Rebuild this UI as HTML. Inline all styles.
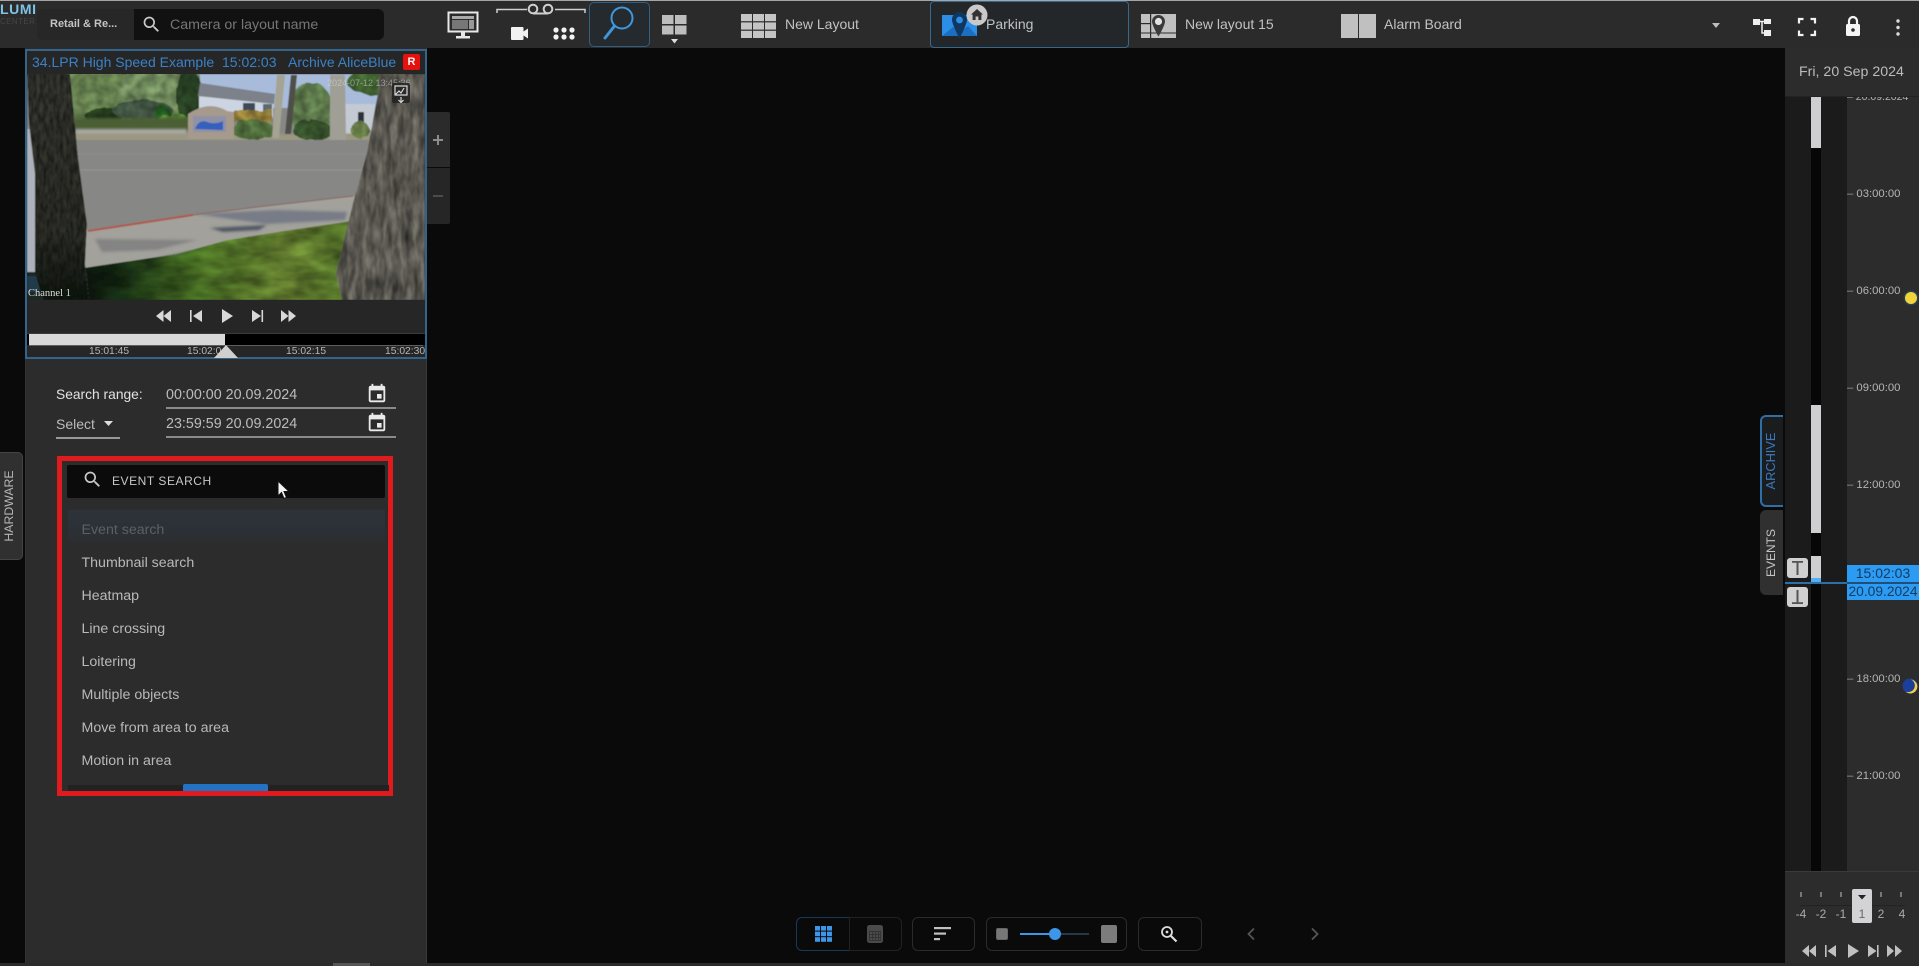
<!DOCTYPE html>
<html lang="en">
<head>
<meta charset="utf-8">
<title>Event search</title>
<style>
html,body{margin:0;padding:0;background:#0a0a0a;width:1919px;height:966px;overflow:hidden}
#r{position:relative;width:1919px;height:966px;overflow:hidden;background:#0a0a0a;font-family:"Liberation Sans",sans-serif;font-size:14px;color:#bbb;filter:blur(.35px)}
#r div,#r svg,#r span.t{position:absolute}
.t{white-space:nowrap;line-height:20px;height:20px}
.tick{color:#b5b5b5;font-size:10.3px;line-height:14px;height:14px;white-space:nowrap}
.rt{color:#b5b5b5;font-size:11.3px;line-height:14px;height:14px;white-space:nowrap;left:1847px}
.rt span{color:#9a9a9a}
.item{left:81.5px;color:#b9b9b9;font-size:14.2px;line-height:20px;height:20px;white-space:nowrap}
.btn{border:1.5px solid #2b2b2b;border-radius:6px;box-sizing:border-box;top:917px;height:34px}
.vt{transform:rotate(-90deg);transform-origin:center;white-space:nowrap;text-align:center}
</style>
</head>
<body>
<div id="r">

<!-- Top bar -->
<div style="left:0;top:0;width:1919px;height:48px;background:#2b2b2b"></div>
<div style="left:0;top:0;width:1919px;height:1px;background:#a5a5a5"></div>

<div class="t" style="left:0;top:-1px;font-size:14px;font-weight:bold;color:#7fc4e6;letter-spacing:.6px">LUMI</div>
<div class="t" style="left:0;top:12px;font-size:8px;color:#444;letter-spacing:.4px">CENTER</div>

<div style="left:37px;top:9px;width:347px;height:31px;background:#272727;border-radius:6px"></div>
<div style="left:134px;top:9px;width:250px;height:31px;background:#111;border-radius:0 6px 6px 0"></div>
<div class="t" style="left:50px;top:14px;font-size:11px;font-weight:bold;color:#c4c4c4">Retail &amp; Re...</div>
<svg style="left:141px;top:14px" width="21" height="21" viewBox="0 0 24 24" fill="#c8c8c8"><path d="M15.5 14h-.79l-.28-.27C15.41 12.59 16 11.11 16 9.5 16 5.91 13.09 3 9.5 3S3 5.91 3 9.5 5.91 16 9.5 16c1.61 0 3.09-.59 4.23-1.57l.27.28v.79l5 4.99L20.49 19l-4.99-5zm-6 0C7.01 14 5 11.99 5 9.5S7.01 5 9.5 5 14 7.01 14 9.5 11.99 14 9.5 14z"/></svg>
<div class="t" style="left:170px;top:15px;color:#767676;font-size:14.2px">Camera or layout name</div>

<!-- monitor icon -->
<svg style="left:447px;top:11px" width="32" height="29" viewBox="0 0 32 29" fill="none">
<rect x="1.5" y="1.5" width="29" height="19" fill="#2b2b2b" stroke="#e8e8e8" stroke-width="2"/>
<rect x="5" y="5" width="22" height="3" fill="#aaa"/><rect x="5" y="9" width="16" height="9" fill="#777"/><rect x="22" y="9" width="5" height="9" fill="#999"/>
<rect x="14" y="21" width="4" height="4" fill="#e8e8e8"/><rect x="9" y="25" width="14" height="2.5" fill="#e8e8e8"/>
</svg>
<!-- tape bracket -->
<svg style="left:496px;top:2px" width="90" height="14" viewBox="0 0 90 14" fill="none" stroke="#cfcfcf" stroke-width="1.5">
<path d="M1 11V7.5H31"/><path d="M59 7.5H89V11"/>
<circle cx="37" cy="7" r="4.3" stroke-width="2"/><circle cx="52" cy="7" r="4.3" stroke-width="2"/><path d="M37 11.5H52" stroke-width="2"/>
</svg>
<!-- camera -->
<svg style="left:511px;top:27px" width="17" height="13" viewBox="0 0 17 13" fill="#f2f2f2"><rect x="0" y="0" width="12.5" height="13" rx="1"/><path d="M12.5 4.5L17 1.5V11.5L12.5 8.5Z"/></svg>
<!-- dots -->
<svg style="left:553px;top:27px" width="22" height="13" viewBox="0 0 22 13" fill="#f2f2f2"><circle cx="3" cy="3" r="2.6"/><circle cx="11" cy="3" r="2.6"/><circle cx="19" cy="3" r="2.6"/><circle cx="3" cy="10" r="2.6"/><circle cx="11" cy="10" r="2.6"/><circle cx="19" cy="10" r="2.6"/></svg>
<!-- search tab -->
<div style="left:589px;top:2px;width:61px;height:45px;box-sizing:border-box;border:1.5px solid #2f5f85;border-radius:5px;background:#252a2e"></div>
<svg style="left:589px;top:2px" width="61" height="45" viewBox="0 0 61 45" fill="none" stroke="#3f97dc"><circle cx="33" cy="16" r="10.5" stroke-width="2"/><path d="M25.5 24L16 36" stroke-width="3" stroke-linecap="round"/></svg>
<!-- layouts grid -->
<svg style="left:662px;top:15px" width="25" height="33" viewBox="0 0 25 33" fill="#bdbdbd"><rect x="0" y="0" width="11.5" height="9"/><rect x="13" y="0" width="11.5" height="9"/><rect x="0" y="10.5" width="11.5" height="9"/><rect x="13" y="10.5" width="11.5" height="9"/><path d="M9 24h7l-3.5 4.5z" fill="#ddd"/></svg>

<!-- New Layout -->
<svg style="left:741px;top:14px" width="35" height="24" viewBox="0 0 35 24" fill="#c4c4c4"><rect width="11" height="7.2"/><rect x="12" width="11" height="7.2"/><rect x="24" width="11" height="7.2"/><rect y="8.4" width="11" height="7.2"/><rect x="12" y="8.4" width="11" height="7.2"/><rect x="24" y="8.4" width="11" height="7.2"/><rect y="16.8" width="11" height="7.2"/><rect x="12" y="16.8" width="11" height="7.2"/><rect x="24" y="16.8" width="11" height="7.2"/></svg>
<div class="t" style="left:785px;top:14px;color:#c2c2c2">New Layout</div>

<!-- Parking -->
<div style="left:930px;top:1px;width:199px;height:47px;box-sizing:border-box;border:1.5px solid #35698f;border-radius:4px;background:#24272a"></div>
<svg style="left:942px;top:12px" width="36" height="28" viewBox="0 0 36 28">
<rect x="0" y="3" width="35" height="21" fill="#2c8ee6"/>
<path d="M0 24L11 15L18 20L26 14L35 24Z" fill="#1c6fc0"/>
<path d="M17.5 0a7.5 7.5 0 0 1 7.5 7.5c0 5-7.5 19-7.5 19s-7.5-14-7.5-19A7.5 7.5 0 0 1 17.5 0z" fill="#10375f"/>
<circle cx="17.5" cy="8" r="3.4" fill="#2c8ee6"/>
</svg>
<svg style="left:966px;top:4px" width="22" height="22" viewBox="0 0 22 22"><circle cx="11" cy="11" r="10.5" fill="#c9c9c9"/><path d="M11 5l6 5.5h-1.6V16h-3v-3.5h-2.8V16h-3v-5.5H5z" fill="#333"/></svg>
<div class="t" style="left:986px;top:14px;color:#c2c2c2">Parking</div>

<!-- New layout 15 -->
<svg style="left:1141px;top:14px" width="35" height="24" viewBox="0 0 35 24">
<rect width="35" height="24" fill="#c0c0c0"/><rect x="0" y="9" width="9" height="1.2" fill="#2b2b2b"/><rect x="9" y="0" width="1.2" height="24" fill="#2b2b2b"/><rect y="18.5" width="35" height="1" fill="#2b2b2b"/>
<path d="M17.5 1a6.5 6.5 0 0 1 6.5 6.5c0 4-6.5 15-6.5 15S11 11.5 11 7.5A6.5 6.5 0 0 1 17.5 1z" fill="#3a3a3a"/><circle cx="17.5" cy="7.5" r="3.6" fill="#e2e2e2"/>
</svg>
<div class="t" style="left:1185px;top:14px;color:#c2c2c2">New layout 15</div>

<!-- Alarm Board -->
<svg style="left:1341px;top:14px" width="35" height="24" viewBox="0 0 35 24" fill="#c0c0c0"><rect width="17" height="24"/><rect x="18" width="17" height="24"/></svg>
<div class="t" style="left:1384px;top:14px;color:#c2c2c2">Alarm Board</div>

<!-- Top right icons -->
<svg style="left:1711px;top:22px" width="10" height="7" viewBox="0 0 10 7" fill="#bdbdbd"><path d="M1 1h8L5 6z"/></svg>
<svg style="left:1752px;top:16px" width="20" height="21" viewBox="0 0 20 21" fill="#eee"><rect x="1" y="3" width="7" height="6"/><rect x="12" y="3" width="7" height="5"/><rect x="12" y="14" width="7" height="6"/><path d="M8 5.5h4M10 5.5V17h2" stroke="#eee" stroke-width="1.5" fill="none"/></svg>
<svg style="left:1797px;top:17px" width="20" height="20" viewBox="0 0 20 20" fill="none" stroke="#f2f2f2" stroke-width="2.2"><path d="M2 6.5V2h4.5M13.5 2H18v4.5M18 13.5V18h-4.5M6.5 18H2v-4.5"/></svg>
<svg style="left:1843px;top:15px" width="20" height="22" viewBox="0 0 20 22"><path d="M6 9V6a4 4 0 0 1 8 0v3" stroke="#f5f5f5" stroke-width="2.2" fill="none"/><rect x="3" y="9" width="14" height="12" rx="1.5" fill="#f5f5f5"/><circle cx="10" cy="15" r="1.8" fill="#2b2b2b"/></svg>
<svg style="left:1895px;top:18px" width="6" height="20" viewBox="0 0 6 20" fill="#ddd"><circle cx="3" cy="3" r="1.7"/><circle cx="3" cy="9.5" r="1.7"/><circle cx="3" cy="16" r="1.7"/></svg>

<!-- Left panel -->
<div style="left:25px;top:48px;width:402px;height:915px;background:#2c2c2c;border-right:1px solid #3a3a3a;border-left:1px solid #333;box-sizing:border-box"></div>

<!-- Video widget -->
<div style="left:25px;top:49px;width:402px;height:310px;box-sizing:border-box;border:2px solid #33658c;background:#262626"></div>
<div class="t" style="left:32px;top:52px;color:#3a82c6">34.LPR High Speed Example</div>
<div class="t" style="left:222px;top:52px;color:#3a82c6">15:02:03</div>
<div class="t" style="left:288px;top:52px;color:#3a82c6">Archive AliceBlue</div>
<div class="t" style="left:403px;top:54px;width:17px;height:16px;line-height:16px;background:#e4110f;border-radius:2px;color:#f3f3f3;text-align:center;font-size:11px;font-weight:bold">R</div>

<svg style="left:27px;top:74px" width="398" height="226" viewBox="0 0 398 226">
<defs>
<filter id="barkL" x="0" y="0" width="100%" height="100%" color-interpolation-filters="sRGB"><feTurbulence type="fractalNoise" baseFrequency=".3 .1" numOctaves="2" seed="4" result="n"/><feColorMatrix in="n" type="matrix" values=".7 0 0 0 .25 .7 0 0 0 .25 .7 0 0 0 .25 0 0 0 0 1" result="g"/><feBlend in="SourceGraphic" in2="g" mode="multiply" result="b"/><feComposite in="b" in2="SourceGraphic" operator="in"/></filter>
<filter id="barkR" x="0" y="0" width="100%" height="100%" color-interpolation-filters="sRGB"><feTurbulence type="fractalNoise" baseFrequency=".14 .04" numOctaves="3" seed="9" result="n"/><feColorMatrix in="n" type="matrix" values=".85 0 0 0 .2 .85 0 0 0 .2 .85 0 0 0 .2 0 0 0 0 1" result="g"/><feBlend in="SourceGraphic" in2="g" mode="multiply" result="b"/><feComposite in="b" in2="SourceGraphic" operator="in"/></filter>
<filter id="leaf" x="-5%" y="-5%" width="110%" height="110%" color-interpolation-filters="sRGB"><feTurbulence type="fractalNoise" baseFrequency=".1" numOctaves="2" seed="3" result="n"/><feDisplacementMap in="SourceGraphic" in2="n" scale="6" result="d"/><feColorMatrix in="n" type="matrix" values=".6 0 0 0 .45 .6 0 0 0 .45 .6 0 0 0 .45 0 0 0 0 1" result="g"/><feBlend in="d" in2="g" mode="multiply" result="b"/><feComposite in="b" in2="d" operator="in"/></filter>
<filter id="grass" x="0" y="0" width="100%" height="100%" color-interpolation-filters="sRGB"><feTurbulence type="fractalNoise" baseFrequency=".03 .07" numOctaves="3" seed="6" result="n"/><feColorMatrix in="n" type="matrix" values=".8 0 0 0 .35 .8 0 0 0 .35 .8 0 0 0 .35 0 0 0 0 1" result="g"/><feBlend in="SourceGraphic" in2="g" mode="multiply" result="b"/><feComposite in="b" in2="SourceGraphic" operator="in"/></filter>
<filter id="soft" x="-10%" y="-30%" width="120%" height="160%"><feGaussianBlur stdDeviation="1.4"/></filter>
<filter id="all" x="0" y="0" width="100%" height="100%"><feGaussianBlur stdDeviation=".6"/></filter>
<linearGradient id="gl" x1="56" x2="324" y1="0" y2="0" gradientUnits="userSpaceOnUse"><stop offset="0" stop-color="#0e1a10"/><stop offset=".16" stop-color="#1d3a18"/><stop offset=".4" stop-color="#588a2c"/><stop offset=".75" stop-color="#7fa03c"/><stop offset="1" stop-color="#6a9234"/></linearGradient>
<linearGradient id="lt" x1="0" x2="0" y1="0" y2="1"><stop offset="0" stop-color="#4a4a42"/><stop offset=".7" stop-color="#3e4036"/><stop offset="1" stop-color="#141f14"/></linearGradient>
</defs>
<g filter="url(#all)">
<rect width="398" height="226" fill="#878786"/>
<!-- sky -->
<rect x="165" y="0" width="190" height="34" fill="#a8bbdb"/>
<!-- foliage -->
<g filter="url(#leaf)">
<rect x="38" y="0" width="134" height="46" fill="#80a262"/>
<ellipse cx="70" cy="18" rx="32" ry="28" fill="#86a868"/>
<ellipse cx="125" cy="16" rx="34" ry="24" fill="#94b67a"/>
<ellipse cx="162" cy="22" rx="13" ry="26" fill="#35552f"/>
<ellipse cx="76" cy="42" rx="18" ry="9" fill="#324f28"/>
<ellipse cx="115" cy="36" rx="30" ry="10" fill="#566f58"/>
<ellipse cx="135" cy="40" rx="8" ry="9" fill="#2f7a2c"/>
<ellipse cx="148" cy="48" rx="16" ry="8" fill="#6ea844"/>
<ellipse cx="284" cy="36" rx="22" ry="28" fill="#7a9e62"/>
<ellipse cx="352" cy="8" rx="32" ry="14" fill="#527e3e"/>
</g>
<!-- house -->
<path d="M172 22L246 28V44H172Z" fill="#cdd5e2"/>
<path d="M173 9L248 20L247 30L171 22Z" fill="#7b818a"/>
<rect x="216" y="29" width="12" height="12" fill="#3e4a55"/><rect x="236" y="30" width="9" height="13" fill="#5b6772"/>
<rect x="314" y="30" width="34" height="30" fill="#c4cad4"/>
<rect x="331" y="38" width="6" height="12" fill="#2c3238"/>
<!-- ground strip -->
<rect x="40" y="44" width="125" height="14" fill="#4c5f36" filter="url(#soft)"/>
<rect x="48" y="55" width="112" height="6" fill="#a8a8a4" filter="url(#soft)"/>
<rect x="40" y="60" width="310" height="7" fill="#9c9880" filter="url(#soft)"/>
<!-- bushes -->
<g filter="url(#leaf)"><rect x="206" y="36" width="40" height="12" fill="#c4a94c"/><ellipse cx="226" cy="56" rx="22" ry="10" fill="#6c9350"/><ellipse cx="285" cy="56" rx="20" ry="10" fill="#466a38"/><ellipse cx="333" cy="56" rx="9" ry="9" fill="#88a35e"/></g>
<!-- palm trunks -->
<path d="M250 1L258 1L252 64L245 64Z" fill="#a5a394"/>
<path d="M264 1L270 1L264 60L258 60Z" fill="#4f4f4a"/>
<path d="M303 1L318 1L319 66L303 66Z" fill="#a09f96"/>
<!-- sign -->
<path d="M161 40Q182 26 200 37L207 38V65H161Z" fill="#a69a8c"/>
<rect x="166" y="42" width="33" height="16" fill="#9091a8"/>
<path d="M168 55Q172 45 180 48T196 47V56Z" fill="#3460bd"/>
<!-- road -->
<path d="M8 66H342L328 122L166 141L61 156L8 158Z" fill="#878786"/>
<path d="M50 96H340" stroke="#979797" stroke-width="1.5" opacity=".7"/>
<path d="M50 80H340" stroke="#969696" stroke-width="1" opacity=".5"/>
<path d="M50 124H338" stroke="#6e6e6e" stroke-width="7" opacity=".3" filter="url(#soft)"/>
<!-- sidewalk -->
<path d="M0 160L61 156L166 141L328 122L322 150L200 168L70 196L0 200Z" fill="#a2a19b"/>
<path d="M168 140L250 136L320 138L318 146L240 150Z" fill="#6d7282" opacity=".8" filter="url(#soft)"/>
<path d="M183 154L240 151L232 156L196 158Z" fill="#4f5664" filter="url(#soft)"/>
<path d="M68 165L170 166L130 176L75 178Z" fill="#737577" opacity=".65" filter="url(#soft)"/>
<path d="M61 157L166 141" stroke="#b0564a" stroke-width="2" fill="none"/>
<path d="M166 141L230 133L326 122" stroke="#8c6e66" stroke-width="1.2" fill="none"/>
<rect x="0" y="55" width="12" height="145" fill="#aeb2ba"/>
<!-- grass -->
<path d="M56 194L150 180L200 166L256 157L324 147L318 226H56Z" fill="url(#gl)" filter="url(#grass)"/>
<rect x="0" y="198" width="60" height="28" fill="#1a2620"/>
<path d="M0 202h12v16H0z" fill="#2c4a6a" opacity=".6"/>
<!-- trees -->
<path d="M0 0H43L46 30L51 83L60 150L58 190L62 226H16L8 200L8 100L2 50Z" fill="url(#lt)" filter="url(#barkL)"/>
<path d="M352 0H398V226H315L309 199L326 129L340 79L351 19Z" fill="#8f8b80" filter="url(#barkR)"/>
</g>
<text x="1" y="222" font-family="Liberation Serif,serif" font-size="10.5" fill="#dedede">Channel 1</text>
<text x="300" y="12" font-family="Liberation Sans,sans-serif" font-size="9" fill="#d8d8d8" opacity=".55">2024-07-12 13:45:36</text>
<rect x="365" y="9" width="18" height="20" rx="2" fill="#222" opacity=".85"/>
<path d="M368 12h12v9h-12zM368 21l4-4 2 2 3-5M374 23v5M371.5 26l2.5 2.5 2.5-2.5" fill="none" stroke="#d8d8d8" stroke-width="1.2"/>
</svg>

<!-- controls -->
<svg style="left:150px;top:306px" width="160" height="20" viewBox="0 0 160 20" fill="#d8d8d8">
<path d="M6 10l7.5-6v12zM13.5 10L21 4v12z"/>
<path d="M40 4h1.6v12h-1.6zM52 4v12l-9-6z"/>
<path d="M72 3v14l11-7z"/>
<path d="M102 4v12l9-6zM111.5 4h1.6v12h-1.6z"/>
<path d="M131 4v12l7.5-6zM138.5 4v12l7.5-6z"/>
</svg>

<!-- timeline -->
<div style="left:27px;top:333px;width:398px;height:12px;background:#000;border-top:1px solid #3a3a3a;box-sizing:border-box"></div>
<div style="left:29px;top:334px;width:196px;height:11px;background:#d8d8d8"></div>
<div style="left:29px;top:345px;width:394px;height:1px;background:#5e5e5e"></div>
<div class="tick" style="left:89px;top:345px">15:01:45</div>
<div class="tick" style="left:187px;top:345px">15:02:0</div>
<div class="tick" style="left:286px;top:345px">15:02:15</div>
<div class="tick" style="left:385px;top:345px">15:02:30</div>
<svg style="left:213px;top:345px" width="26" height="13" viewBox="0 0 26 13"><path d="M13 0L25 13H1Z" fill="#cfcfcf"/></svg>

<!-- zoom buttons -->
<div style="left:427px;top:112px;width:23px;height:55px;background:#2b2b2b;border-radius:0 2px 0 0"></div>
<div style="left:427px;top:168px;width:23px;height:56px;background:#262626;border-radius:0 0 2px 0"></div>
<svg style="left:432px;top:134px" width="12" height="12" viewBox="0 0 12 12" fill="#8c8c8c"><rect x="5" y="1" width="2" height="10"/><rect x="1" y="5" width="10" height="2"/></svg>
<svg style="left:432px;top:190px" width="12" height="12" viewBox="0 0 12 12" fill="#4c4c4c"><rect x="1" y="5" width="10" height="2"/></svg>

<!-- Search range -->
<div class="t" style="left:56px;top:385px;color:#e2e2e2;font-size:13.8px">Search range:</div>
<div class="t" style="left:166px;top:385px;color:#bcbcbc;font-size:14.3px">00:00:00 20.09.2024</div>
<div style="left:166px;top:407px;width:230px;height:1.5px;background:#8a8a8a"></div>
<svg style="left:366px;top:383px" width="22" height="22" viewBox="0 0 24 24" fill="#eaeaea"><path d="M17 12h-5v5h5v-5zM16 1v2H8V1H6v2H5c-1.11 0-1.99.9-1.99 2L3 19c0 1.1.89 2 2 2h14c1.1 0 2-.9 2-2V5c0-1.1-.9-2-2-2h-1V1h-2zm3 18H5V8h14v11z"/></svg>
<div class="t" style="left:56px;top:414px;color:#bcbcbc">Select</div>
<svg style="left:104px;top:421px" width="10" height="6" viewBox="0 0 10 6" fill="#ddd"><path d="M0 0h9L4.5 5z"/></svg>
<div style="left:56px;top:437px;width:64px;height:1.5px;background:#999"></div>
<div class="t" style="left:166px;top:414px;color:#bcbcbc;font-size:14.3px">23:59:59 20.09.2024</div>
<div style="left:166px;top:436px;width:230px;height:1.5px;background:#8a8a8a"></div>
<svg style="left:366px;top:412px" width="22" height="22" viewBox="0 0 24 24" fill="#eaeaea"><path d="M17 12h-5v5h5v-5zM16 1v2H8V1H6v2H5c-1.11 0-1.99.9-1.99 2L3 19c0 1.1.89 2 2 2h14c1.1 0 2-.9 2-2V5c0-1.1-.9-2-2-2h-1V1h-2zm3 18H5V8h14v11z"/></svg>

<!-- Red box -->
<div style="left:57px;top:456px;width:336px;height:340px;box-sizing:border-box;border:5px solid #e01b1f"></div>
<div style="left:67px;top:465px;width:318px;height:33px;background:#0b0b0b;border-radius:2px"></div>
<svg style="left:82px;top:469px" width="21" height="21" viewBox="0 0 24 24" fill="#c8c8c8"><path d="M15.5 14h-.79l-.28-.27C15.41 12.59 16 11.11 16 9.5 16 5.91 13.09 3 9.5 3S3 5.91 3 9.5 5.91 16 9.5 16c1.61 0 3.09-.59 4.23-1.57l.27.28v.79l5 4.99L20.49 19l-4.99-5zm-6 0C7.01 14 5 11.99 5 9.5S7.01 5 9.5 5 14 7.01 14 9.5 11.99 14 9.5 14z"/></svg>
<div class="t" style="left:112px;top:470.5px;font-size:12px;letter-spacing:.55px;color:#c8c8c8">EVENT SEARCH</div>
<div style="left:68px;top:510px;width:317px;height:35px;background:linear-gradient(#2d3339,#2b3035 70%,#2c2c2c)"></div>
<div class="item" style="top:520px;color:#5b6064">Event search</div>
<div class="item" style="top:553px">Thumbnail search</div>
<div class="item" style="top:586px">Heatmap</div>
<div class="item" style="top:619px">Line crossing</div>
<div class="item" style="top:652px">Loitering</div>
<div class="item" style="top:685px">Multiple objects</div>
<div class="item" style="top:718px">Move from area to area</div>
<div class="item" style="top:751px">Motion in area</div>
<div style="left:68px;top:785px;width:321px;height:6px;background:#222"></div>
<div style="left:183px;top:784px;width:85px;height:7px;background:#2273c4;border-radius:2px 2px 0 0"></div>

<!-- Cursor -->
<svg style="left:277px;top:480px" width="14" height="20" viewBox="0 0 14 20"><path d="M1 1V16L4.5 12.5L7 18.5L9.5 17.5L7 11.5H12Z" fill="#f4f4f4" stroke="#111" stroke-width="1"/></svg>

<!-- Hardware tab -->
<div style="left:-2px;top:452px;width:25px;height:108px;background:#303030;border:1px solid #444;border-radius:0 5px 5px 0;box-sizing:border-box"></div>
<div class="vt" style="left:-27px;top:496px;width:72px;height:20px;line-height:20px;font-size:12.3px;color:#b8b8b8">HARDWARE</div>

<!-- Bottom strip -->
<div style="left:0;top:963px;width:1919px;height:3px;background:#2b2b2b"></div>
<div style="left:333px;top:963px;width:37px;height:3px;background:#555"></div>

<!-- Bottom toolbar -->
<div class="btn" style="left:796px;width:54px;border-color:#193a57;border-right:none;border-radius:6px 0 0 6px"></div>
<div class="btn" style="left:849px;width:53px;border-left:1px solid #1c2c3a;border-radius:0 6px 6px 0;border-color:#222"></div>
<svg style="left:815px;top:926px" width="17" height="16" viewBox="0 0 17 16" fill="#3d96e8"><rect width="5" height="4.6"/><rect x="6" width="5" height="4.6"/><rect x="12" width="5" height="4.6"/><rect y="5.6" width="5" height="4.6"/><rect x="6" y="5.6" width="5" height="4.6"/><rect x="12" y="5.6" width="5" height="4.6"/><rect y="11.2" width="5" height="4.6"/><rect x="6" y="11.2" width="5" height="4.6"/><rect x="12" y="11.2" width="5" height="4.6"/></svg>
<svg style="left:867px;top:925px" width="16" height="18" viewBox="0 0 16 18"><rect width="16" height="18" rx="2.5" fill="#4a4a4a"/><rect x="2" y="6" width="12" height="10" fill="#333"/><path d="M3 8h10M3 11h10M3 14h10" stroke="#666" stroke-dasharray="2 1"/></svg>
<div class="btn" style="left:912px;width:63px"></div>
<svg style="left:934px;top:927px" width="17" height="14" viewBox="0 0 17 14" fill="#c0c0c0"><rect width="17" height="2.2"/><rect y="5.5" width="12" height="2.2"/><rect y="11" width="6" height="2.2"/></svg>
<div class="btn" style="left:986px;width:141px"></div>
<div style="left:996px;top:928px;width:12px;height:12px;background:#777;border:1px solid #666;border-radius:2px;box-sizing:border-box"></div>
<div style="left:1020px;top:933px;width:35px;height:2px;background:#3d96e8"></div>
<div style="left:1055px;top:933px;width:34px;height:2px;background:#25394a"></div>
<div style="left:1049px;top:928px;width:12px;height:12px;background:#3d96e8;border-radius:50%"></div>
<div style="left:1101px;top:925px;width:16px;height:18px;background:#7c7c7c;border-radius:2px"></div>
<div class="btn" style="left:1138px;width:64px"></div>
<svg style="left:1160px;top:925px" width="18" height="18" viewBox="0 0 18 18" fill="none" stroke="#dcdcdc"><circle cx="7" cy="7" r="5" stroke-width="1.8"/><circle cx="7" cy="7" r="1.4" fill="#dcdcdc" stroke="none"/><path d="M11 11L16.5 16.5" stroke-width="2.2"/></svg>
<svg style="left:1246px;top:927px" width="10" height="14" viewBox="0 0 10 14" fill="none" stroke="#555" stroke-width="1.8"><path d="M8 1.5L2.5 7L8 12.5"/></svg>
<svg style="left:1310px;top:927px" width="10" height="14" viewBox="0 0 10 14" fill="none" stroke="#555" stroke-width="1.8"><path d="M2 1.5L7.5 7L2 12.5"/></svg>

<!-- Right panel -->
<div style="left:1785px;top:48px;width:134px;height:915px;background:#2c2c2c"></div>
<div class="t" style="left:1799px;top:62px;font-size:14.2px;color:#bcbcbc">Fri, 20 Sep 2024</div>
<div style="left:1785px;top:96px;width:134px;height:1px;background:#232323"></div>
<div style="left:1785px;top:97px;width:62px;height:775px;background:#1b1b1b"></div>
<div style="left:1811px;top:97px;width:10px;height:775px;background:#070707"></div>
<div style="left:1811px;top:97px;width:10px;height:51px;background:#cfcfd2"></div>
<div style="left:1811px;top:405px;width:10px;height:128px;background:#cfcfd2"></div>
<div style="left:1811px;top:556px;width:10px;height:25px;background:#cfcfd2"></div>
<div style="left:1811px;top:578px;width:10px;height:4px;background:#55aef0"></div>

<!-- time labels -->
<div style="left:1847px;top:97px;width:72px;height:6px;overflow:hidden">
<div class="rt" style="left:0;top:-7px;font-size:10.5px;width:72px"><span>–</span> 20.09.2024</div></div>
<div class="rt" style="top:187px"><span>–</span> 03:00:00</div>
<div class="rt" style="top:284px"><span>–</span> 06:00:00</div>
<div class="rt" style="top:381px"><span>–</span> 09:00:00</div>
<div class="rt" style="top:478px"><span>–</span> 12:00:00</div>
<div class="rt" style="top:672px"><span>–</span> 18:00:00</div>
<div class="rt" style="top:769px"><span>–</span> 21:00:00</div>
<svg style="left:1903px;top:290px" width="16" height="16" viewBox="0 0 16 16"><circle cx="8" cy="8" r="7.5" fill="#27506f" opacity=".6"/><circle cx="8" cy="8" r="6" fill="#f3d33c"/></svg>
<svg style="left:1902px;top:678px" width="17" height="17" viewBox="0 0 17 17"><circle cx="8" cy="8" r="7.5" fill="#1c3f9b"/><path d="M9 1.5A7 7 0 1 1 3.5 13.5A6 6 0 0 0 9 1.5Z" fill="#f0cf4a"/></svg>

<!-- Archive / Events tabs -->
<div style="left:1760px;top:415px;width:23px;height:92px;box-sizing:border-box;border:2px solid #2f6fa8;border-right:none;border-radius:6px 0 0 6px;background:#1a1c1e"></div>
<div class="vt" style="left:1741px;top:451px;width:60px;height:20px;line-height:20px;font-size:12.8px;color:#3a78bd">ARCHIVE</div>
<div style="left:1760px;top:510px;width:23px;height:85px;background:#303030;border-radius:6px 0 0 6px"></div>
<div class="vt" style="left:1741px;top:543px;width:60px;height:20px;line-height:20px;font-size:12px;color:#c4c4c4">EVENTS</div>

<!-- T buttons -->
<div style="left:1787px;top:558px;width:21px;height:20px;background:#d0d0d0;border-radius:3px"></div>
<svg style="left:1791px;top:561px" width="13" height="14" viewBox="0 0 13 14" fill="#555"><rect x="1" y="0" width="11" height="1.8"/><rect x="5.5" y="1.5" width="2" height="12.5"/></svg>
<div style="left:1787px;top:587px;width:21px;height:20px;background:#d0d0d0;border-radius:3px"></div>
<svg style="left:1791px;top:590px" width="13" height="14" viewBox="0 0 13 14" fill="#555"><rect x="1" y="12.2" width="11" height="1.8"/><rect x="5.5" y="0" width="2" height="12.5"/></svg>

<!-- current time -->
<div style="left:1785px;top:582px;width:62px;height:1.5px;background:#2f6fa8"></div>
<div style="left:1847px;top:565px;width:72px;height:35px;background:#2b9bf4"></div>
<div style="left:1847px;top:582px;width:72px;height:1.5px;background:#1f4f78"></div>
<div class="t" style="left:1847px;top:563px;width:72px;text-align:center;color:#153a5c;font-size:14px">15:02:03</div>
<div class="t" style="left:1847px;top:582px;width:72px;text-align:center;color:#153a5c;font-size:13.8px">20.09.2024</div>

<!-- speed -->
<div style="left:1785px;top:871px;width:134px;height:1px;background:#3a3a3a"></div>
<div style="left:1800px;top:905px;width:105px;height:1px;background:#222"></div>
<svg style="left:1795px;top:892px" width="115" height="6" viewBox="0 0 115 6" fill="#777"><rect x="5" y="0" width="2" height="5"/><rect x="25" y="0" width="2" height="5"/><rect x="45" y="0" width="2" height="5"/><rect x="85" y="0" width="2" height="5"/><rect x="105" y="0" width="2" height="5"/></svg>
<div style="left:1852px;top:889px;width:20px;height:34px;background:#d3d3d6;border-radius:2px"></div>
<svg style="left:1858px;top:895px" width="8" height="5" viewBox="0 0 8 5" fill="#222"><path d="M0 0h8L4 4.5z"/></svg>
<div class="t" style="left:1791px;top:904px;width:20px;text-align:center;font-size:12px;color:#aaa">-4</div>
<div class="t" style="left:1811px;top:904px;width:20px;text-align:center;font-size:12px;color:#aaa">-2</div>
<div class="t" style="left:1831px;top:904px;width:20px;text-align:center;font-size:12px;color:#aaa">-1</div>
<div class="t" style="left:1852px;top:904px;width:20px;text-align:center;font-size:12px;color:#666">1</div>
<div class="t" style="left:1871px;top:904px;width:20px;text-align:center;font-size:12px;color:#aaa">2</div>
<div class="t" style="left:1892px;top:904px;width:20px;text-align:center;font-size:12px;color:#aaa">4</div>
<svg style="left:1800px;top:942px" width="106" height="18" viewBox="0 0 106 18" fill="#c0c0c0">
<path d="M2 9l7-6v12zM9 9l7-6v12z"/>
<path d="M25 3h1.6v12h-1.6zM36 3v12l-8.5-6z"/>
<path d="M48 2v14l11-7z"/>
<path d="M68 3v12l8.5-6zM77 3h1.6v12h-1.6z"/>
<path d="M87 3v12l7-6zM95 3v12l7-6z"/>
</svg>

</div>
</body>
</html>
